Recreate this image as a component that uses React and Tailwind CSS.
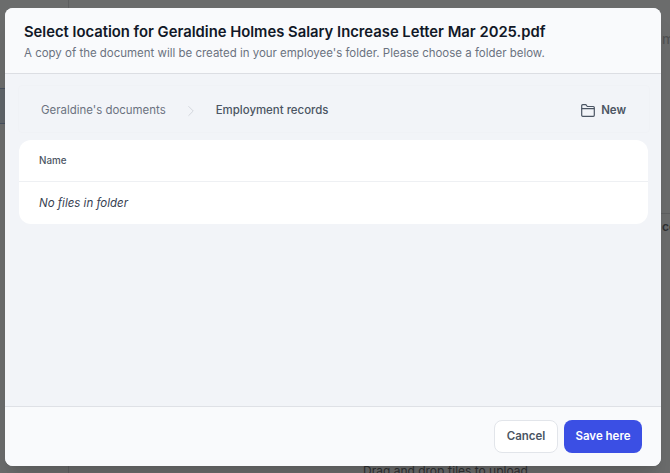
import { ChevronRight } from "lucide-react"

// Folder picker dialog over the dimmed documents page
function FolderIcon() {
    return (
        <svg width="14" height="13" viewBox="0 0 14 13" fill="none" stroke="#4b5563" strokeWidth="1.2" strokeLinejoin="round">
            <path d="M.7 2.2V1.7a1 1 0 0 1 1-1h3.2l1.4 1.8h6a1 1 0 0 1 1 1v7.8a1 1 0 0 1-1 1H1.7a1 1 0 0 1-1-1V2.2z" />
            <path d="M.7 4.6h12.6" />
        </svg>
    )
}

function Backdrop() {
    return (
        <div className="absolute inset-0 bg-[#6b6c6c]">
            <div className="absolute left-[68px] top-0 h-full w-px bg-[#5e5f60]" />
            <div className="absolute left-0 top-[88px] h-[36px] w-[5px] border-y border-[#46505f] bg-[#5f6469]" />
            <div className="absolute left-[662px] top-[29px] text-sm text-[#4d4e4f]">m</div>
            <div className="absolute left-[661px] top-[213px] h-px w-[9px] bg-[#5e5f60]" />
            <div className="absolute left-[662px] top-[219px] text-xs font-semibold text-[#2f3032]">cc</div>
            <div className="absolute left-[363px] top-[463px] text-xs text-[#2f3032]">Drag and drop files to upload</div>
        </div>
    )
}

export default function App() {
    return (
        <div className="relative h-[473px] w-[670px] overflow-hidden font-['Inter',sans-serif]">
            <Backdrop />
            <div className="absolute left-[5px] top-[8px] flex h-[458px] w-[656px] flex-col overflow-hidden rounded-lg bg-[#f2f4f8] shadow-xl">
                <div className="h-[66px] border-b border-[#dcdee3] bg-[#f9fafc] px-[19px] pt-[14px]">
                    <h1 className="text-[14.8px] leading-[20px] font-semibold text-[#111827]">
                        Select location for Geraldine Holmes Salary Increase Letter Mar 2025.pdf
                    </h1>
                    <p className="mt-[1px] text-[11.47px] leading-[20px] text-[#6b7280]">
                        A copy of the document will be created in your employee's folder. Please choose a folder below.
                    </p>
                </div>
                <div className="flex-1 px-[13px] pt-[11px]">
                    <div className="mr-[-2px] flex h-[48px] items-center rounded border border-[#f0f2f6] pt-[4px] pr-[23px] pl-[22px] text-[11.45px]">
                        <span className="text-[#6b7280]">Geraldine's documents</span>
                        <ChevronRight className="mx-[16px] h-[18px] w-[18px] text-[#d0d3da]" strokeWidth={1.25} />
                        <span className="font-medium text-[#4b5563]">Employment records</span>
                        <button type="button" className="ml-auto flex items-center gap-[6px] font-semibold text-[#4b5563]">
                            <FolderIcon />
                            New
                        </button>
                    </div>
                    <div className="mt-[7px] ml-px w-[629px] rounded-xl bg-white">
                        <div className="flex h-[42px] items-center border-b border-[#eef0f3] px-[20px] pt-[1px] text-[9.8px] font-medium text-[#4b5563]">
                            Name
                        </div>
                        <div className="flex h-[42px] items-center px-[20px] pt-[2px] text-[11.5px] text-[#374151] italic">
                            No files in folder
                        </div>
                    </div>
                </div>
                <div className="flex h-[60px] items-center justify-end gap-[6px] border-t border-[#dfe1e6] bg-[#f9fafc] pr-[19px]">
                    <button type="button" className="h-[33px] w-[64px] rounded-lg border-[1.5px] border-[#e2e5ea] bg-white text-[11.5px] font-semibold text-[#4b5563]">
                        Cancel
                    </button>
                    <button type="button" className="h-[33px] w-[78px] rounded-lg bg-[#3b4fe4] text-[11.5px] font-semibold text-white">
                        Save here
                    </button>
                </div>
            </div>
        </div>
    )
}
